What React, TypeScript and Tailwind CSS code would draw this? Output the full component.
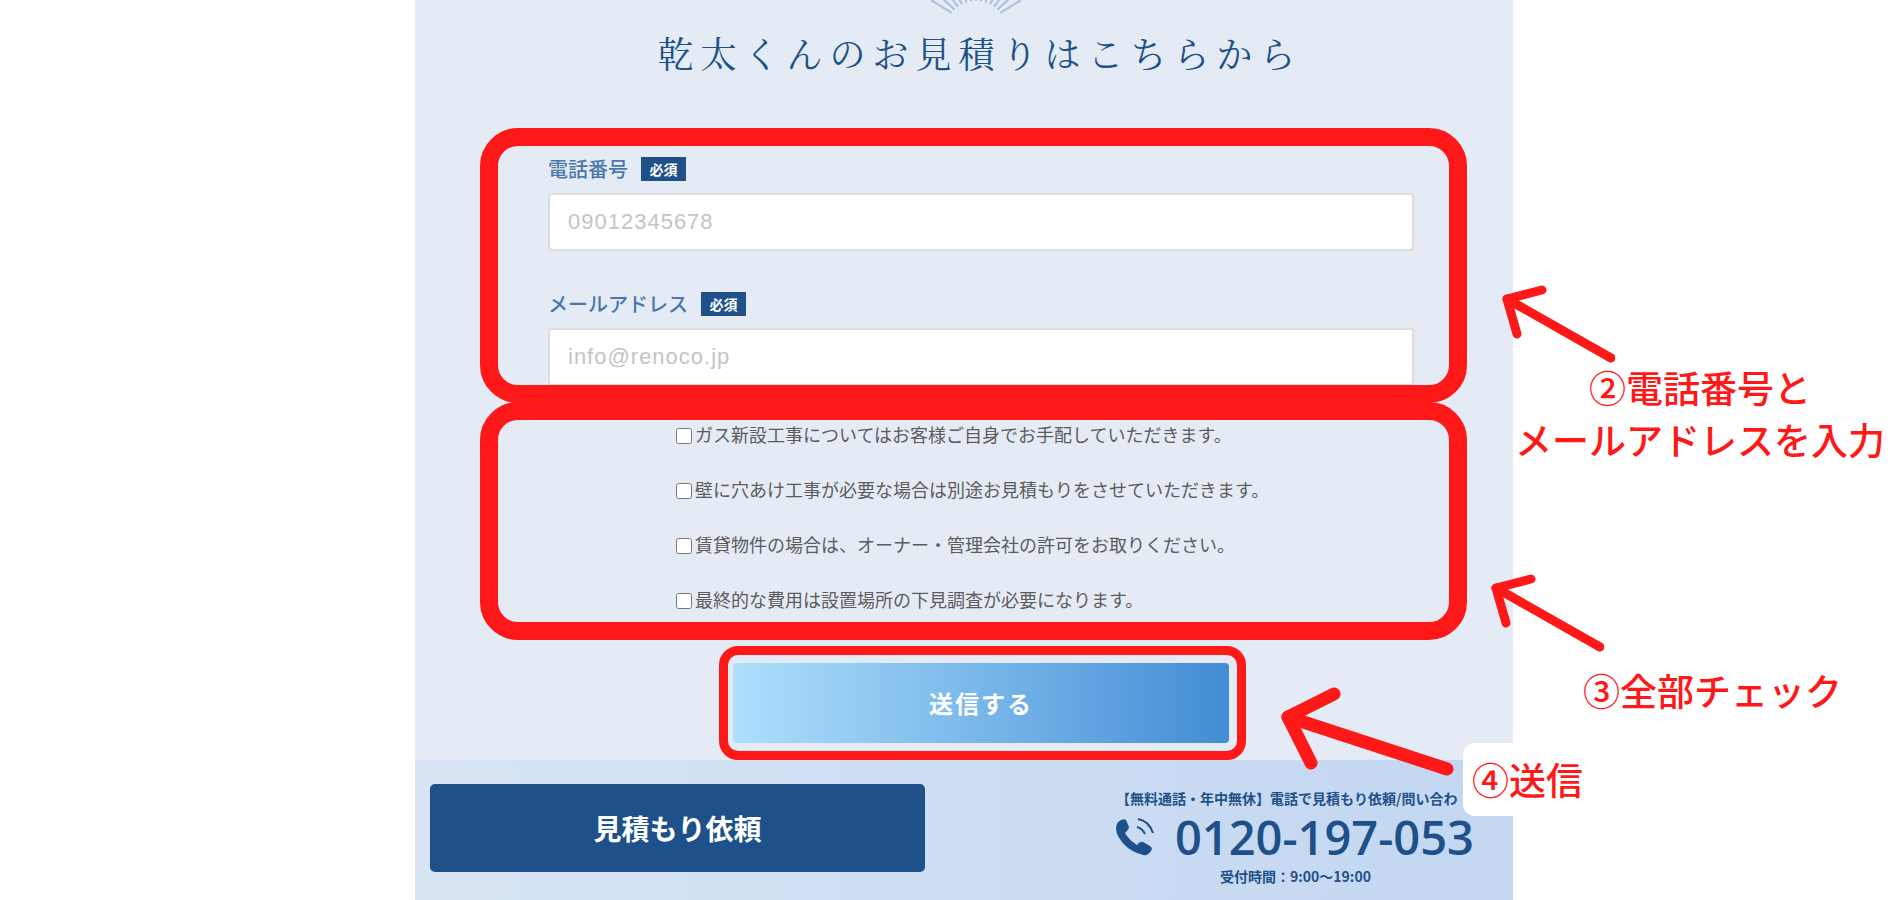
import React from 'react';

const requirements = [
  'ガス新設工事についてはお客様ご自身でお手配していただきます。',
  '壁に穴あけ工事が必要な場合は別途お見積もりをさせていただきます。',
  '賃貸物件の場合は、オーナー・管理会社の許可をお取りください。',
  '最終的な費用は設置場所の下見調査が必要になります。',
];

interface FieldProps {
  id: string;
  label: string;
  type: string;
  placeholder: string;
}

const Field: React.FC<FieldProps> = ({ id, label, type, placeholder }) => (
  <div>
    <label htmlFor={id} className="flex h-6 items-center gap-[13px] text-[20px] leading-6 font-medium text-[#4a78ad]">
      {label}
      <span className="flex h-6 w-[45px] items-center justify-center bg-[#1e5189] text-[14px] font-bold text-white">必須</span>
    </label>
    <input
      id={id}
      type={type}
      placeholder={placeholder}
      className="mt-3 block h-[58px] w-full rounded-[4px] border-2 border-[#dddddd] bg-white px-[18px] font-['Liberation_Sans',sans-serif] text-[22px] tracking-[1px] text-[#333333] placeholder:text-[#c4c4c4]"
    />
  </div>
);

const SmallArrow = ({ className }: { className: string }) => (
  <svg width="114" height="80" viewBox="0 0 114 80" fill="none" stroke="#ff1818" strokeWidth="9" strokeLinecap="round" strokeLinejoin="round" className={className}>
    <path d="M41 6 L6 15 L16 50" />
    <path d="M6 15 L110 74" />
  </svg>
);

const BigArrow = ({ className }: { className: string }) => (
  <svg width="176" height="92" viewBox="0 0 176 92" fill="none" stroke="#ff1818" strokeWidth="13" strokeLinecap="round" strokeLinejoin="round" className={className}>
    <path d="M54 8 L8 31 L31 77" />
    <path d="M8 31 L167 83" />
  </svg>
);

const Sunburst = () => {
  const rays = Array.from({ length: 13 }, (_, i) => ((30 + i * 10) * Math.PI) / 180);
  return (
    <svg width="90" height="14" viewBox="0 0 90 14" stroke="#a9bedb" strokeWidth="2">
      {rays.map((a) => (
        <line key={a} x1={45 + Math.cos(a) * 28} y1={25 - Math.sin(a) * 24} x2={45 + Math.cos(a) * 52} y2={26 - Math.sin(a) * 52} />
      ))}
    </svg>
  );
};

const PhoneIcon = () => (
  <svg width="38" height="38" viewBox="0 0 38 38" fill="none" className="shrink-0">
    <path d="M2 4 Q7 0 10 2 L13 9 Q13 11 9 15 Q13 22 21 27 Q24 23 27 24 L34 28 Q37 30 35 33 Q32 38 27 37 Q10 33 2 18 Q-2 10 2 4Z" fill="#1e5189" />
    <path d="M21 9 Q26 10 29 16 M22 1 Q33 3 37 15" stroke="#1e5189" strokeWidth="2" />
  </svg>
);

export default function App() {
  return (
    <div className="overflow-hidden bg-white pr-[387px] pl-[415px] font-['Noto_Sans_CJK_JP',sans-serif]">
      <main className="bg-[#e4ebf5]">
        <header className="flex flex-col items-center pl-[24px]">
          <Sunburst />
          <h1 className="mt-[13px] pl-2 font-['Noto_Serif_CJK_JP','Noto_Sans_CJK_JP',serif] text-[36px] leading-[52px] font-normal tracking-[7px] text-[#1e5189]">
            乾太くんのお見積りはこちらから
          </h1>
        </header>

        <form onSubmit={(e) => e.preventDefault()} className="mt-[49px] pr-[46px] pl-[65px]">
          <section className="relative">
            <div className="h-[275px] overflow-hidden rounded-[38px] border-[18px] border-[#ff1818] pt-[11px] pr-[35px] pl-[50px]">
              <div className="flex flex-col gap-[41px]">
                <Field id="tel" label="電話番号" type="tel" placeholder="09012345678" />
                <Field id="mail" label="メールアドレス" type="email" placeholder="info@renoco.jp" />
              </div>
            </div>
            <SmallArrow className="absolute top-[156px] left-full ml-[34px]" />
            <p className="absolute top-[233px] left-full ml-[48px] text-center text-[37px] leading-[52px] font-medium whitespace-nowrap text-[#ff1818]">
              ②電話番号と
              <br />
              メールアドレスを入力
            </p>
          </section>

          <section className="relative -mt-px">
            <ul className="flex flex-col gap-[31px] rounded-[38px] border-[18px] border-[#ff1818] pt-0.5 pb-[11px] pl-[178px]">
              {requirements.map((text, i) => (
                <li key={text} className="flex h-6 items-center">
                  <input id={`agree-${i}`} type="checkbox" className="mt-1 mr-[3px] size-4 shrink-0" />
                  <label htmlFor={`agree-${i}`} className="text-[18px] leading-6 font-normal whitespace-nowrap text-[#5c5c5c]">
                    {text}
                  </label>
                </li>
              ))}
            </ul>
            <SmallArrow className="absolute top-[171px] left-full ml-[23px]" />
            <p className="absolute top-[262px] left-full ml-[116px] text-[37px] leading-[52px] font-medium whitespace-nowrap text-[#ff1818]">③全部チェック</p>
          </section>

          <div className="relative mt-[6px] mr-[221px] ml-[239px] rounded-[19px] border-[9px] border-[#ff1818] py-2 pr-[8px] pl-[5px]">
            <button type="submit" className="block h-20 w-full rounded-[4px] bg-linear-to-r from-[#aee0fc] to-[#428dd5] text-[24px] font-bold tracking-[2px] text-white">
              送信する
            </button>
            <BigArrow className="absolute top-[31px] left-full z-10 ml-[43px]" />
            <p className="absolute top-[88px] left-full z-10 ml-[226px] rounded-xl bg-white px-[9px] py-[10px] text-[37px] leading-[53px] font-medium whitespace-nowrap text-[#ff1818]">④送信</p>
          </div>
        </form>

        <footer className="flex h-[140px] items-start justify-between bg-linear-to-r from-[#d8e4f3] via-[#cdddf3] to-[#c3d7f1] pl-[15px] text-[#1e5189]">
          <button type="button" className="mt-6 h-[88px] w-[495px] rounded-[5px] bg-[#1e5189] text-[28px] font-bold text-white">
            見積もり依頼
          </button>
          <address className="mt-[26px] flex w-[397px] flex-col not-italic">
            <p className="text-[14px] leading-6 font-bold whitespace-nowrap">【無料通話・年中無休】電話で見積もり依頼/問い合わ</p>
            <a href="tel:0120197053" className="flex h-[54px] items-center gap-[21px] font-['Open_Sans',sans-serif] text-[47px] leading-[54px] font-semibold whitespace-nowrap">
              <PhoneIcon />
              0120-197-053
            </a>
            <p className="pl-[104px] text-[14px] leading-6 font-bold whitespace-nowrap">受付時間：9:00〜19:00</p>
          </address>
        </footer>
      </main>
    </div>
  );
}
